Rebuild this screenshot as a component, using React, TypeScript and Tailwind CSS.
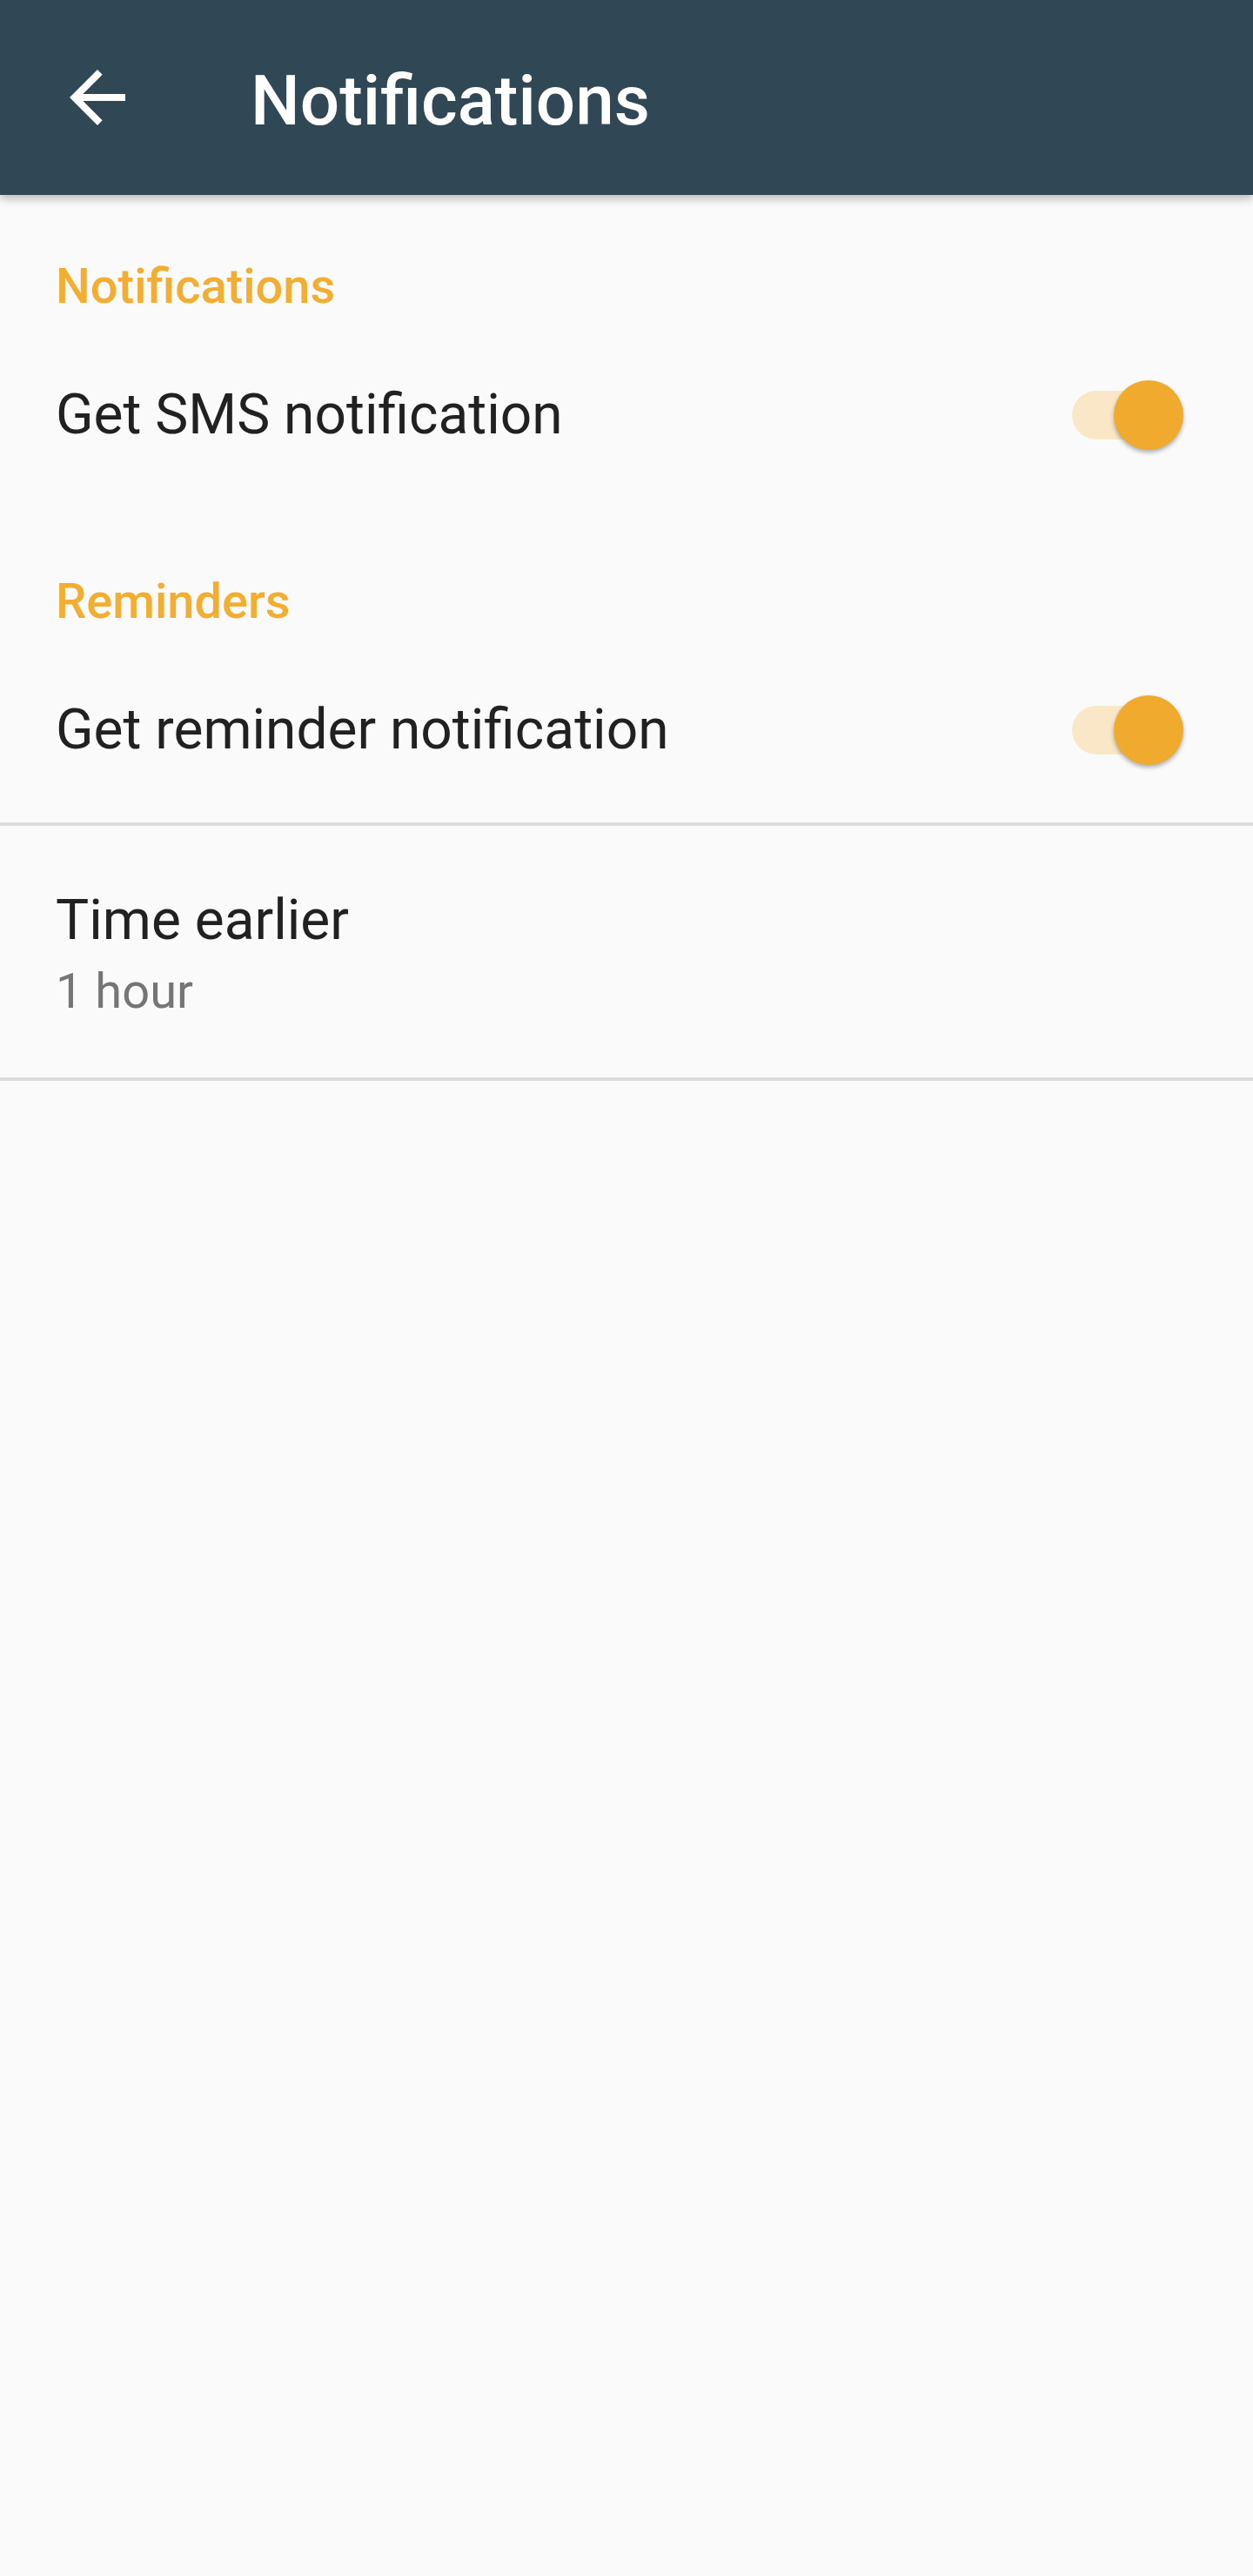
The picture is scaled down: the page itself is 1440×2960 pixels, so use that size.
function BackArrow() {
  return (
    <svg viewBox="0 0 24 24" className="h-[96px] w-[96px]" fill="#ffffff">
      <path d="M20 11H7.83l5.59-5.59L12 4l-8 8 8 8 1.41-1.41L7.83 13H20v-2z" />
    </svg>
  );
}

function Toggle() {
  return (
    <div className="relative h-[80px] w-[128px] shrink-0">
      <div className="absolute left-0 top-[12px] h-[56px] w-[110px] rounded-full bg-[#f9e7c7]" />
      <div className="absolute right-0 top-0 h-[80px] w-[80px] rounded-full bg-[#f0aa2e] shadow-[0_3px_5px_rgba(0,0,0,0.3)]" />
    </div>
  );
}

function Category({ title, top }: { title: string; top: string }) {
  return (
    <div className={`px-[64px] ${top}`}>
      <div className="text-[56px] font-medium leading-[56px] text-[#f3ae32]">
        {title}
      </div>
    </div>
  );
}

function SwitchRow({ label }: { label: string }) {
  return (
    <div className="mt-[56px] flex h-[128px] items-center justify-between pl-[64px] pr-[80px]">
      <span className="text-[64px] leading-[64px] text-[#212121]">{label}</span>
      <Toggle />
    </div>
  );
}

export default function App() {
  return (
    <div className="min-h-screen bg-[#fafafa] font-['Roboto',sans-serif]">
      <header className="relative z-10 flex h-[224px] items-center bg-[#304756] shadow-[0_4px_10px_rgba(0,0,0,0.28)]">
        <div className="ml-[64px] flex h-[96px] w-[96px] items-center justify-center">
          <BackArrow />
        </div>
        <h1 className="ml-[128px] mt-[8px] text-[80px] font-medium leading-[80px] text-white">
          Notifications
        </h1>
      </header>

      <Category title="Notifications" top="pt-[77px]" />
      <SwitchRow label="Get SMS notification" />

      <Category title="Reminders" top="pt-[122px]" />
      <SwitchRow label="Get reminder notification" />

      <div className="mt-[42px] h-[4px] bg-[#dcdcdc]" />

      <div className="px-[64px] pb-[71px] pt-[77px]">
        <div className="text-[64px] leading-[64px] text-[#212121]">Time earlier</div>
        <div className="mt-[21px] text-[56px] leading-[56px] text-[#757575]">1 hour</div>
      </div>

      <div className="h-[4px] bg-[#dcdcdc]" />
    </div>
  );
}
